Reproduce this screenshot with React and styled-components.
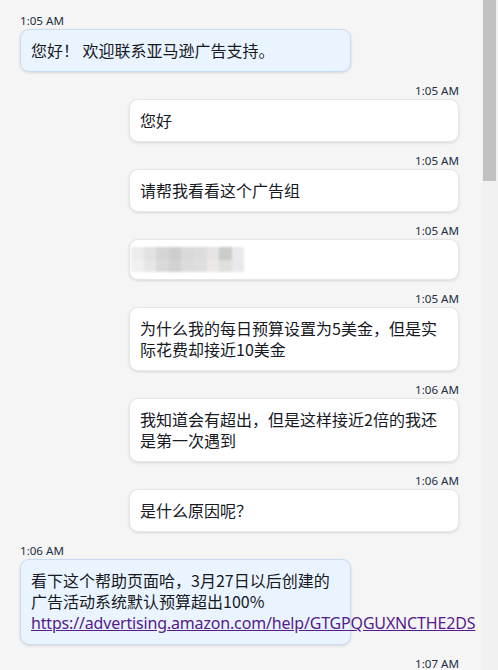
import React from 'react';
import styled, { createGlobalStyle } from 'styled-components';

const messages = [
  { side: 'agent', time: '1:05 AM', text: '您好！ 欢迎联系亚马逊广告支持。' },
  { side: 'customer', time: '1:05 AM', text: '您好' },
  { side: 'customer', time: '1:05 AM', text: '请帮我看看这个广告组' },
  { side: 'customer', time: '1:05 AM', blurred: true },
  {
    side: 'customer',
    time: '1:05 AM',
    text: '为什么我的每日预算设置为5美金，但是实际花费却接近10美金',
  },
  {
    side: 'customer',
    time: '1:06 AM',
    text: '我知道会有超出，但是这样接近2倍的我还是第一次遇到',
  },
  { side: 'customer', time: '1:06 AM', text: '是什么原因呢？' },
  {
    side: 'agent',
    time: '1:06 AM',
    text: '看下这个帮助页面哈，3月27日以后创建的广告活动系统默认预算超出100%',
    link: 'https://advertising.amazon.com/help/GTGPQGUXNCTHE2DS',
  },
  { side: 'customer', time: '1:07 AM', text: '' },
];

// pixelated placeholder for the blurred screenshot the customer sent
const blurRows = [
  ['#ececec', '#e2e2e2', '#d5d5d5', '#cdcdcd', '#d9d9d9', '#dcdcdc', '#e6e4e4', '#c9ccc9', '#e9e9ed'],
  ['#f0f0f0', '#e6e6e6', '#d9d9d9', '#d2d2d2', '#dcdcdc', '#dedede', '#ede8e8', '#dde0dd', '#e9e9ed'],
];

function App() {
  return (
    <>
      <GlobalStyle />
      <Page>
        <Chat>
          {messages.map((m, i) => (
            <Group key={i} $side={m.side}>
              <Stamp>{m.time}</Stamp>
              {(m.text || m.blurred || m.link) && (
                <Bubble $side={m.side} $image={m.blurred}>
                  {m.blurred ? (
                    <Blur>
                      {blurRows.flat().map((c, j) => (
                        <BlurCell key={j} $color={c} />
                      ))}
                    </Blur>
                  ) : (
                    <>
                      {m.text}
                      {m.link && (
                        <>
                          <br />
                          <Link href='#'>{m.link}</Link>
                        </>
                      )}
                    </>
                  )}
                </Bubble>
              )}
            </Group>
          ))}
        </Chat>
        <Track>
          <Thumb />
        </Track>
      </Page>
    </>
  );
}

const GlobalStyle = createGlobalStyle`
  body {
    margin: 0;
    background: #f5f5f5;
    font-family: "Noto Sans", "Noto Sans CJK SC", sans-serif;
    color: #16191f;
  }
`;

const Page = styled.div`
  display: flex;
  height: 670px;
  overflow: hidden;
`;

const Chat = styled.div`
  flex: 1;
  display: flex;
  flex-direction: column;
  padding: 14px 23px 0 20px;
  overflow: hidden;
`;

const Group = styled.div`
  display: flex;
  flex-direction: column;
  align-items: ${(p) => (p.$side === 'agent' ? 'flex-start' : 'flex-end')};
  margin-top: 12px;
  flex-shrink: 0;
  &:first-child {
    margin-top: 0;
  }
`;

const Stamp = styled.div`
  font-size: 11.6px;
  line-height: 13px;
  margin-bottom: 2px;
  color: #232f3e;
`;

const Bubble = styled.div`
  box-sizing: border-box;
  width: ${(p) => (p.$side === 'agent' ? '331px' : '330px')};
  padding: ${(p) => (p.$image ? '7px 1px' : '10px')};
  font-family: "Noto Sans CJK SC", "Noto Sans", sans-serif;
  font-size: 16px;
  line-height: 21px;
  color: #16191f;
  border-radius: 9px;
  background: ${(p) => (p.$side === 'agent' ? '#eaf4fe' : '#ffffff')};
  border: 1px solid ${(p) => (p.$side === 'agent' ? '#c9dcef' : '#e6e6e6')};
  box-shadow: 0 1px 3px rgba(0, 0, 0, 0.12);
  white-space: pre-wrap;
`;

const Link = styled.a`
  font-family: "Noto Sans", sans-serif;
  letter-spacing: -0.17px;
  color: #551a8b;
  text-decoration: underline;
  white-space: nowrap;
`;

const Blur = styled.div`
  display: grid;
  grid-template-columns: repeat(9, 12.6px);
  grid-auto-rows: 12.5px;
  width: max-content;
  filter: blur(1.2px);
`;

const BlurCell = styled.div`
  background: ${(p) => p.$color};
`;

const Track = styled.div`
  width: 16px;
  flex-shrink: 0;
  background: #f1f1f1;
`;

const Thumb = styled.div`
  width: 13px;
  margin-left: 1px;
  height: 181px;
  background: #c1c1c1;
`;

export default App;
